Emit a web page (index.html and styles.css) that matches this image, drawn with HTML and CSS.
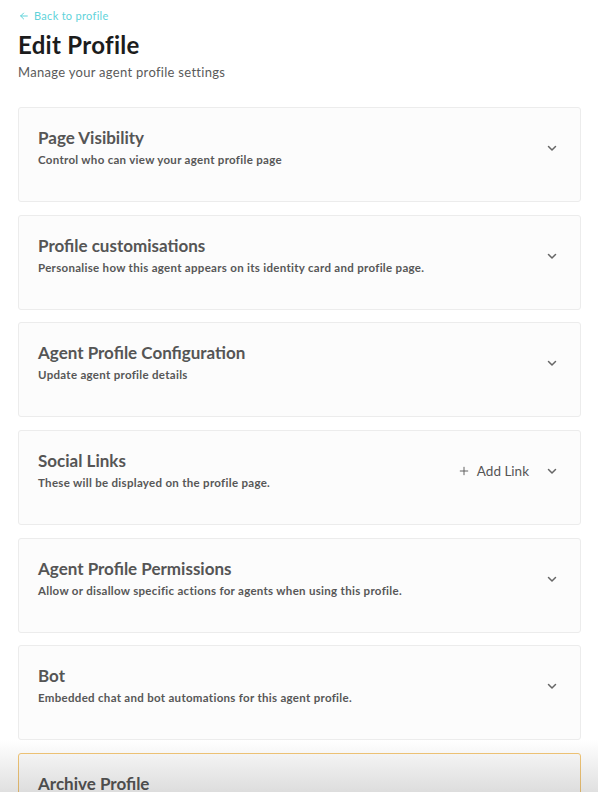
FILE: index.html
```html
<!DOCTYPE html>
<html lang="en">
<head>
<meta charset="utf-8">
<link rel="stylesheet" href="styles.css">
</head>
<body>
<main class="page">
  <a class="back" href="#"><svg class="back-icon" viewBox="0 0 12 12" width="10" height="10"><path d="M10 6H2M5.5 2.5L2 6l3.5 3.5" fill="none" stroke="currentColor" stroke-width="1.2" stroke-linecap="round" stroke-linejoin="round"/></svg>Back to profile</a>
  <h1 class="title">Edit Profile</h1>
  <p class="subtitle">Manage your agent profile settings</p>

  <div class="cards">
    <section class="card">
      <div class="card-text">
        <h2 class="card-title">Page Visibility</h2>
        <p class="card-desc">Control who can view your agent profile page</p>
      </div>
      <div class="card-actions"><svg class="chev" viewBox="0 0 12 12" width="12" height="12"><path d="M2.5 4.5L6 8l3.5-3.5" fill="none" stroke="currentColor" stroke-width="1.5" stroke-linecap="round" stroke-linejoin="round"/></svg></div>
    </section>
    <section class="card">
      <div class="card-text">
        <h2 class="card-title">Profile customisations</h2>
        <p class="card-desc">Personalise how this agent appears on its identity card and profile page.</p>
      </div>
      <div class="card-actions"><svg class="chev" viewBox="0 0 12 12" width="12" height="12"><path d="M2.5 4.5L6 8l3.5-3.5" fill="none" stroke="currentColor" stroke-width="1.5" stroke-linecap="round" stroke-linejoin="round"/></svg></div>
    </section>
    <section class="card">
      <div class="card-text">
        <h2 class="card-title">Agent Profile Configuration</h2>
        <p class="card-desc">Update agent profile details</p>
      </div>
      <div class="card-actions"><svg class="chev" viewBox="0 0 12 12" width="12" height="12"><path d="M2.5 4.5L6 8l3.5-3.5" fill="none" stroke="currentColor" stroke-width="1.5" stroke-linecap="round" stroke-linejoin="round"/></svg></div>
    </section>
    <section class="card">
      <div class="card-text">
        <h2 class="card-title">Social Links</h2>
        <p class="card-desc">These will be displayed on the profile page.</p>
      </div>
      <div class="card-actions">
        <button class="add-link"><svg viewBox="0 0 12 12" width="10" height="10"><path d="M6 1.5v9M1.5 6h9" fill="none" stroke="currentColor" stroke-width="1.1" stroke-linecap="round"/></svg>Add Link</button>
        <svg class="chev" viewBox="0 0 12 12" width="12" height="12"><path d="M2.5 4.5L6 8l3.5-3.5" fill="none" stroke="currentColor" stroke-width="1.5" stroke-linecap="round" stroke-linejoin="round"/></svg>
      </div>
    </section>
    <section class="card">
      <div class="card-text">
        <h2 class="card-title">Agent Profile Permissions</h2>
        <p class="card-desc">Allow or disallow specific actions for agents when using this profile.</p>
      </div>
      <div class="card-actions"><svg class="chev" viewBox="0 0 12 12" width="12" height="12"><path d="M2.5 4.5L6 8l3.5-3.5" fill="none" stroke="currentColor" stroke-width="1.5" stroke-linecap="round" stroke-linejoin="round"/></svg></div>
    </section>
    <section class="card">
      <div class="card-text">
        <h2 class="card-title">Bot</h2>
        <p class="card-desc">Embedded chat and bot automations for this agent profile.</p>
      </div>
      <div class="card-actions"><svg class="chev" viewBox="0 0 12 12" width="12" height="12"><path d="M2.5 4.5L6 8l3.5-3.5" fill="none" stroke="currentColor" stroke-width="1.5" stroke-linecap="round" stroke-linejoin="round"/></svg></div>
    </section>
    <section class="card card-warn">
      <div class="card-text">
        <h2 class="card-title">Archive Profile</h2>
      </div>
    </section>
  </div>
</main>
<div class="fade"></div>
</body>
</html>
```

FILE: styles.css
```css
html, body {
  margin: 0;
  padding: 0;
  background: #ffffff;
  overflow: hidden;
}
body {
  font-family: Lato, "Open Sans", "Liberation Sans", sans-serif;
  color: #555;
}
.page {
  padding: 9px 17px 0 18px;
}
.back {
  display: flex;
  align-items: center;
  gap: 5px;
  padding-left: 1px;
  color: #5fd3da;
  font-size: 11px;
  letter-spacing: 0.3px;
  text-decoration: none;
  line-height: 14px;
}
.title {
  margin: 8px 0 0;
  font-size: 24px;
  font-weight: 700;
  letter-spacing: 0.3px;
  color: #1c1c1c;
  line-height: 28px;
}
.subtitle {
  margin: 5px 0 0;
  font-size: 13px;
  letter-spacing: 0.3px;
  color: #5a5a5a;
  line-height: 16px;
}
.cards {
  margin-top: 27px;
  display: flex;
  flex-direction: column;
  gap: 12.67px;
}
.card {
  box-sizing: border-box;
  height: 95px;
  flex: none;
  border: 1px solid #ececec;
  border-radius: 3px;
  background: #fcfcfc;
  display: flex;
  align-items: flex-start;
  justify-content: space-between;
  padding: 20px 22px 0 19px;
}
.card-warn {
  border-color: #f4c878;
}
.card-title {
  margin: 0;
  font-size: 17px;
  font-weight: 700;
  color: #555;
  line-height: 20px;
}
.card-desc {
  margin: 5px 0 0;
  font-size: 11.5px;
  font-weight: 700;
  letter-spacing: 0.3px;
  color: #575757;
  line-height: 14px;
}
.card-actions {
  display: flex;
  align-items: center;
  gap: 17px;
  height: 12px;
  margin-top: 14px;
  color: #666;
}
.chev {
  display: block;
}
.add-link {
  display: inline-flex;
  align-items: center;
  gap: 8px;
  border: 0;
  background: none;
  padding: 0;
  font-family: inherit;
  font-size: 13.5px;
  line-height: 12px;
  color: #555;
}
.fade {
  position: fixed;
  left: 0;
  right: 0;
  bottom: 0;
  height: 52px;
  background: linear-gradient(to bottom, #ffffff, #e0e0e0);
  mix-blend-mode: multiply;
  pointer-events: none;
}
```
